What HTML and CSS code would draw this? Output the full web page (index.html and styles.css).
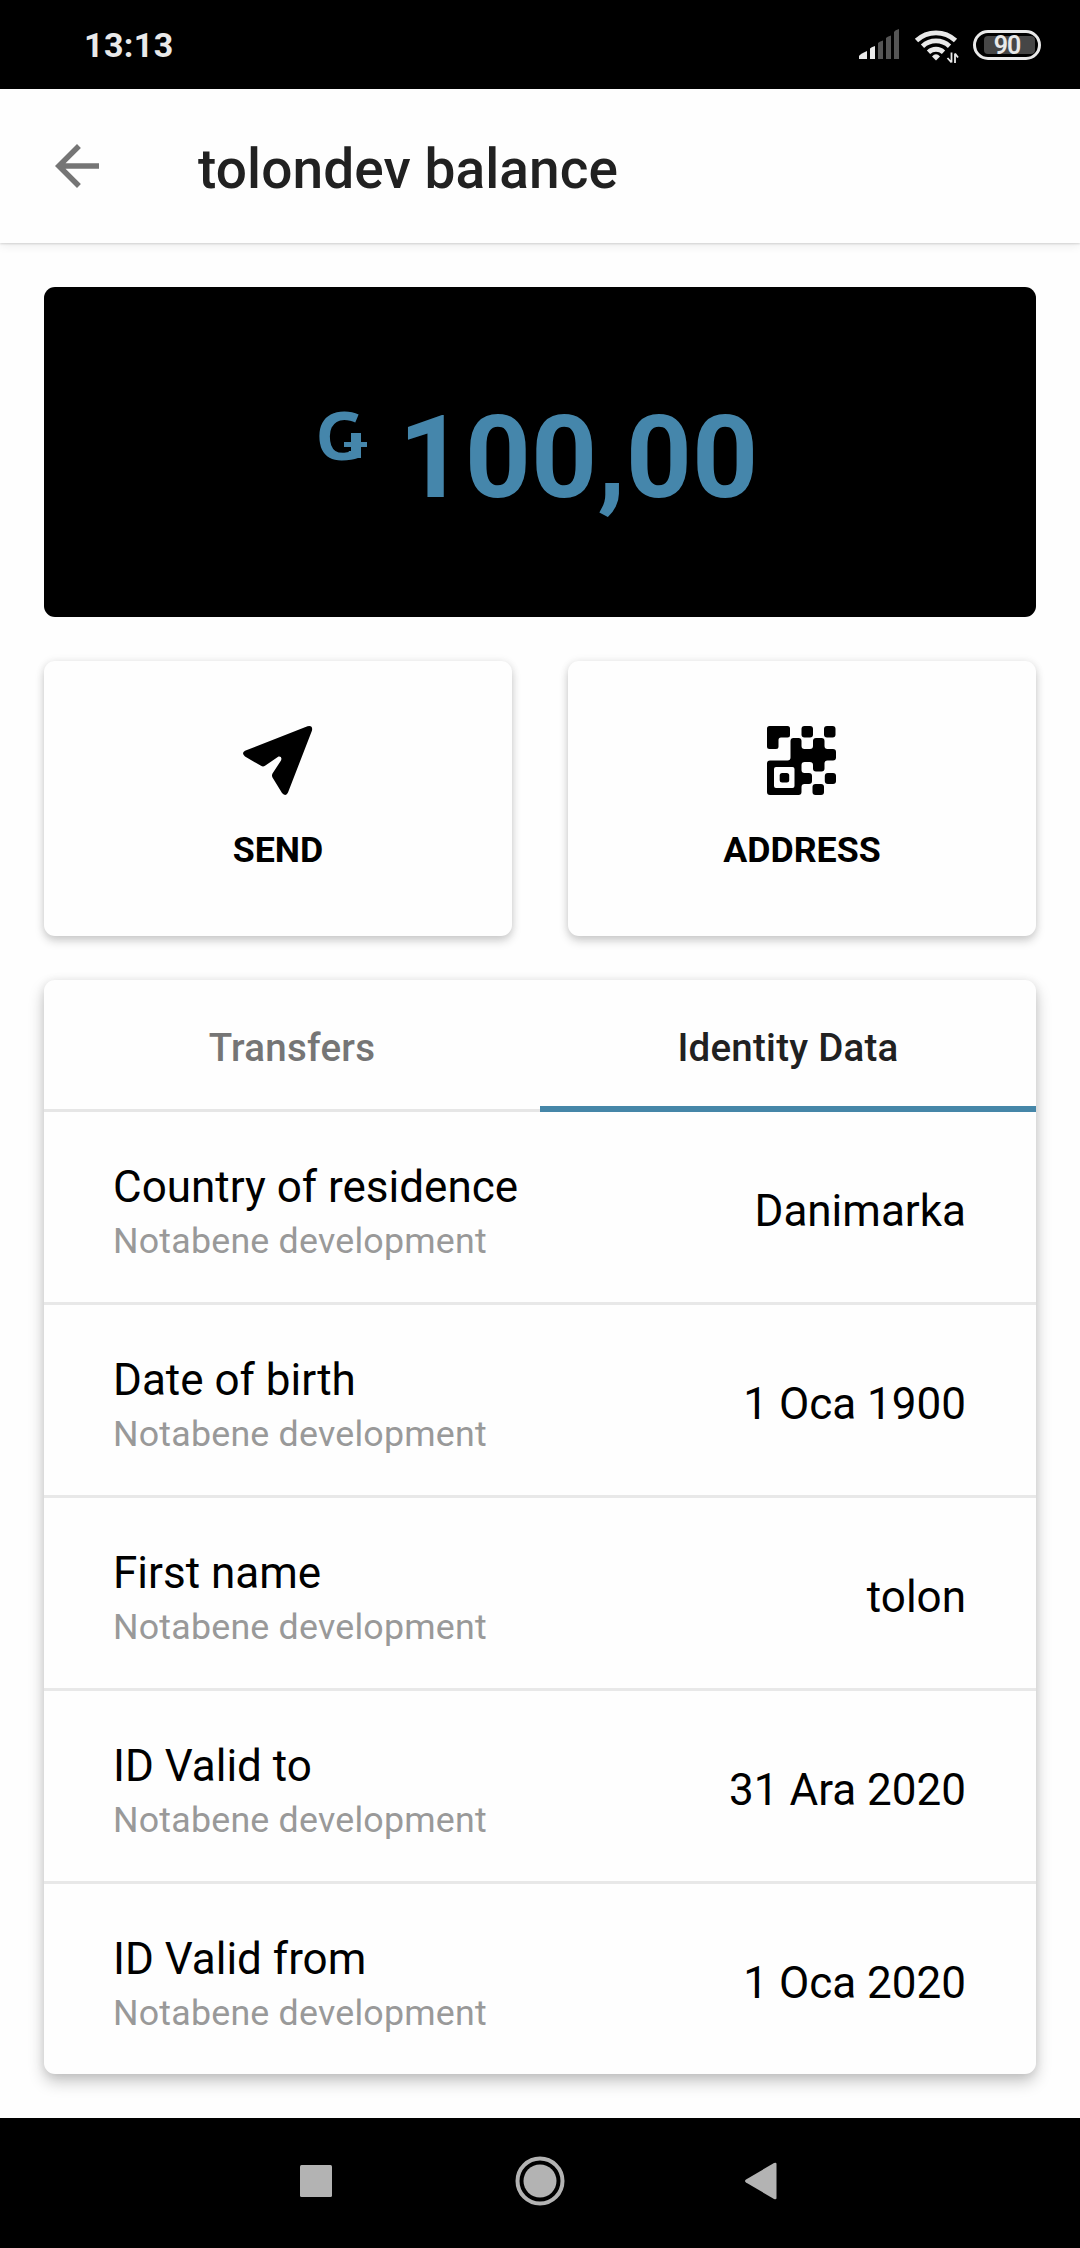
FILE: index.html
```html
<!DOCTYPE html>
<html lang="en">
<head>
<meta charset="utf-8">
<title>tolondev balance</title>
<link rel="stylesheet" href="styles.css">
</head>
<body>
<header class="status">
  <span class="clock">13:13</span>
  <svg class="indicators" width="184" height="40" viewBox="858 24 184 40">
    <g fill="#e9e9e9">
      <path d="M859 58v-3q1-2 8-5v8z"/>
      <path d="M870 58V47.500q1-1.500 5-2.500v13z"/>
    </g>
    <g fill="#555">
      <path d="M878 58V42q1-1.500 5-2.500V58zM886 58V37q1-1.500 5-2.500V58zM894 58V31q1-2 5-3v30z"/>
    </g>
    <g fill="none" stroke="#e9e9e9" stroke-width="4.800">
      <path d="M916.500 39.500a28.500 28.500 0 0 1 39 0"/>
      <path d="M922.500 45.200a20 20 0 0 1 27 0"/>
      <path d="M928.500 51.200a11 11 0 0 1 15 0"/>
    </g>
    <path d="M936 59.500l-4-4q4-4.500 8 0z" fill="#e9e9e9"/>
    <path d="M951.500 51.500V61.500M951.500 61.500l-4-4.500M955 62V52.500M955 52.500l3 4" stroke="#e9e9e9" stroke-width="1.800" fill="none"/>
    <rect x="974.500" y="30.500" width="65" height="27" rx="13.500" fill="none" stroke="#e9e9e9" stroke-width="3"/>
    <rect x="984" y="35" width="51" height="18" rx="4" fill="#464646"/>
    <text class="charge" x="1007" y="52.800" text-anchor="middle">90</text>
  </svg>
</header>

<nav class="appbar">
  <svg class="back" width="66" height="66" viewBox="0 0 24 24"><path d="M20 11H7.830l5.590-5.590L12 4l-8 8 8 8 1.410-1.410L7.830 13H20z"/></svg>
  <h1 class="title">tolondev balance</h1>
</nav>

<main class="content">
  <section class="balance">
    <span class="currency"><span class="glyph">Ǥ</span></span>
    <span class="amount">100,00</span>
  </section>

  <section class="actions">
    <button class="action">
      <svg width="70" height="70" viewBox="0 0 70 70"><path d="M2 25.800L64.500 1.300Q70 0 69 5.500L45 67.500Q43 72 39 68L29.500 52.500Q28.500 50.500 29.500 48.500L38 35.500Q39.500 31 35.500 31.500L22 40.800Q20 42 18 40.800L2 31.500Q-2 28 2 25.800z"/></svg>
      <span class="action-label">SEND</span>
    </button>
    <button class="action">
      <svg width="70" height="70" viewBox="0 -1 70 70">
        <path d="M2.500 0H20.500Q23 0 23 2.500V9Q23 11.500 20.500 11.500H14Q11.500 11.500 11.500 14V20.500Q11.500 23 9 23H2.500Q0 23 0 20.500V2.500Q0 0 2.500 0z"/>
        <rect x="34.500" width="11.500" height="11.500" rx="3"/>
        <rect x="57" width="11.500" height="11.500" rx="3"/>
        <path fill-rule="evenodd" d="M26.500 12H31.500Q34.500 12 34.500 15V20Q34.500 23 37.500 23H43Q46 23 46 20V15Q46 12 49 12H54.500Q57.500 12 57.500 15V20Q57.500 23 60.500 23H66Q69 23 69 26V31.500Q69 34.500 66 34.500H60.500Q57.500 34.500 57.500 37.500V42.500Q57.500 45.500 54.500 45.500H49Q46 45.500 46 42.500V39Q46 36 43 36H37.500Q34.500 36 34.500 39V44Q34.500 47 37.500 47H42Q45 47 45 50V55Q45 58 42 58H37.500Q34.500 58 34.500 61V66Q34.500 69 31.500 69H3Q0 69 0 66V37.500Q0 34.500 3 34.500H20.500Q23.500 34.500 23.500 31.500V15Q23.500 12 26.500 12zM9 41Q7 41 7 43V60Q7 62 9 62H25.500Q27.500 62 27.500 60V43Q27.500 41 25.500 41z"/>
        <rect x="12.700" y="47" width="9.500" height="9.500" rx="2.500"/>
        <rect x="57.800" y="47" width="11.200" height="11" rx="3"/>
        <rect x="45.500" y="58" width="11.500" height="11" rx="3"/>
      </svg>
      <span class="action-label">ADDRESS</span>
    </button>
  </section>

  <section class="details">
    <div class="tabs">
      <div class="tab">Transfers</div>
      <div class="tab active">Identity Data</div>
    </div>
    <div class="row"><div class="field"><span class="name">Country of residence</span><span class="issuer">Notabene development</span></div><span class="value">Danimarka</span></div>
    <div class="row"><div class="field"><span class="name">Date of birth</span><span class="issuer">Notabene development</span></div><span class="value">1 Oca 1900</span></div>
    <div class="row"><div class="field"><span class="name">First name</span><span class="issuer">Notabene development</span></div><span class="value">tolon</span></div>
    <div class="row"><div class="field"><span class="name">ID Valid to</span><span class="issuer">Notabene development</span></div><span class="value">31 Ara 2020</span></div>
    <div class="row"><div class="field"><span class="name">ID Valid from</span><span class="issuer">Notabene development</span></div><span class="value">1 Oca 2020</span></div>
  </section>
</main>

<footer class="navbar">
  <svg width="32" height="32" viewBox="0 0 32 32"><rect width="32" height="32" rx="1.500"/></svg>
  <svg width="50" height="50" viewBox="0 0 50 50"><circle cx="25" cy="25" r="16.500"/><circle class="ring" cx="25" cy="25" r="22.500"/></svg>
  <svg width="32" height="38" viewBox="0 0 32 38"><path d="M1 17.500L29 1Q31.500 0 31.500 2V36Q31.500 38 29 37L1 20.500Q-1 19 1 17.500z"/></svg>
</footer>
</body>
</html>
```
FILE: styles.css
```css
* { box-sizing: border-box; }
body {
  margin: 0;
  width: 1080px;
  height: 2248px;
  display: flex;
  flex-direction: column;
  background: #fefefe;
  color: #000;
  font-family: Roboto, "Noto Sans", sans-serif;
  overflow: hidden;
}
svg { display: block; flex: none; }

.status {
  height: 89px;
  display: flex;
  align-items: center;
  justify-content: space-between;
  padding: 0 38px 0 84px;
  background: #000;
}
.clock { color: #e9e9e9; font-size: 34px; font-weight: 700; line-height: 40px; letter-spacing: 0.4px; padding-top: 1px; }
.charge { fill: #e9e9e9; font-size: 25px; font-weight: 600; letter-spacing: -1px; }

.appbar {
  height: 154px;
  display: flex;
  align-items: center;
  gap: 88px;
  padding-left: 44px;
  background: #fefefe;
  box-shadow: 0 1px 2px rgba(0, 0, 0, .14), 0 3px 9px rgba(0, 0, 0, .07);
}
.back { fill: #757575; }
.title { margin: 0; padding-top: 6px; font-size: 55px; line-height: 64px; font-weight: 500; letter-spacing: 0.08px; color: #212121; }

.content {
  flex: 1;
  display: flex;
  flex-direction: column;
  gap: 44px;
  padding: 44px 44px 0;
}
.balance {
  height: 330px;
  display: flex;
  gap: 34px;
  padding: 111px 0 0 271.5px;
  border-radius: 11px;
  background: #000;
  color: #4586ab;
  font-weight: 700;
}
.currency {
  position: relative;
  width: 49px;
  height: 66px;
  margin-top: 3px;
  font-family: "Noto Sans", sans-serif;
  font-size: 67px;
  line-height: 66px;
}
.glyph { display: block; clip-path: polygon(0 0, 49px 0, 49px 27px, 23px 27px, 23px 50px, 45.2px 50px, 45.2px 66px, 0 66px); }
/* stem and crossbar of the currency sign */
.currency::before, .currency::after { content: ""; position: absolute; background: currentColor; }
.currency::before { left: 35.2px; top: 32px; width: 10px; height: 25px; }
.currency::after { left: 28.5px; top: 40.7px; width: 23.3px; height: 5px; }
.amount { font-size: 115.5px; line-height: 120px; }

.actions { display: grid; grid-template-columns: 1fr 1fr; gap: 56px; }
.action {
  height: 275px;
  display: flex;
  flex-direction: column;
  align-items: center;
  gap: 34px;
  padding: 64px 0 0;
  border: 0;
  border-radius: 11px;
  background: #fefefe;
  color: #000;
  font-family: inherit;
  box-shadow: 0 5px 10px rgba(0, 0, 0, .18), 0 0 8px rgba(0, 0, 0, .08);
}
.action-label { font-size: 35.75px; line-height: 42px; font-weight: 700; }

.details {
  height: 1094px;
  border-radius: 11px;
  background: #fefefe;
  box-shadow: 0 8px 16px rgba(0, 0, 0, .22), 0 1px 10px rgba(0, 0, 0, .09);
}
.tabs { height: 132px; display: grid; grid-template-columns: 1fr 1fr; }
.tab {
  padding-top: 45px;
  border-bottom: 3px solid #e6e6e6;
  font-size: 38.5px;
  line-height: 46px;
  font-weight: 500;
  letter-spacing: 0.25px;
  text-align: center;
  color: #757575;
}
.tab.active { color: #212121; border-bottom: 6px solid #4586a8; }
.row {
  height: 193px;
  display: flex;
  justify-content: space-between;
  padding: 49px 70px 0 69px;
  border-bottom: 3px solid #e8e8e8;
}
.row:last-child { height: 190px; border-bottom: 0; }
.field { display: flex; flex-direction: column; gap: 7px; }
.name { font-size: 44px; line-height: 52px; }
.issuer { font-size: 35.75px; line-height: 42px; letter-spacing: 0.22px; color: #999; }
.value { font-size: 44px; line-height: 52px; padding-top: 24px; }

.navbar {
  height: 130px;
  display: flex;
  align-items: center;
  gap: 180px;
  padding: 0 0 5px 300px;
  background: #000;
  fill: #b3b3b3;
}
.navbar svg:nth-child(2) { margin-left: 3px; }
.ring { fill: none; stroke: #b3b3b3; stroke-width: 4px; }
```
